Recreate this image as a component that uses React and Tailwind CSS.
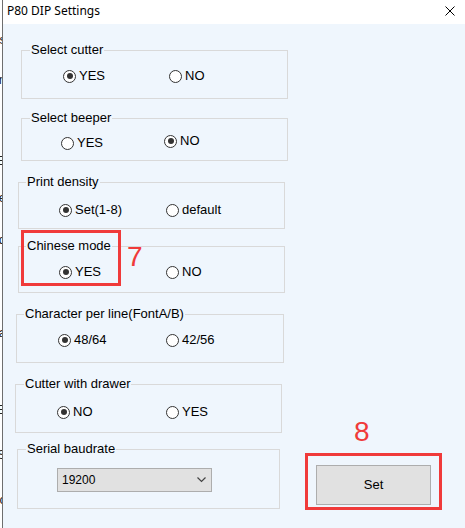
import React from "react";

const font = { fontFamily: '"Liberation Sans", Arial, sans-serif' };

function Radio({ checked, label, width, className = "" }) {
  return (
    <div className={"flex items-center h-[16px] " + className} style={width ? { width } : undefined}>
      <span className="w-[13px] h-[13px] rounded-full border border-[#333333] bg-white flex items-center justify-center shrink-0">
        {checked && <span className="w-[6px] h-[6px] rounded-full bg-[#333333]" />}
      </span>
      <span className="ml-[3px] text-[13px] leading-[16px] text-black">{label}</span>
    </div>
  );
}

function Group({ label, labelLeft, className, children }) {
  return (
    <div className={"relative border border-[#d9d9d9] " + className}>
      <span
        className="absolute top-[-9px] px-[1px] bg-[#eff6fd] text-[13px] leading-[16px] text-black whitespace-nowrap"
        style={{ left: labelLeft }}
      >
        {label}
      </span>
      {children}
    </div>
  );
}

export default function App() {
  const frags = [
    { t: "s", y: 32 },
    { t: "n", y: 72 },
    { t: ".", y: 112 },
    { t: "E", y: 153 },
    { t: "e", y: 190 },
    { t: "d", y: 232 },
    { t: "a", y: 325 },
    { t: "E", y: 402 },
    { t: "S", y: 447 },
    { t: "c", y: 492 },
  ];
  return (
    <div className="w-[465px] h-[528px] flex bg-[#eff6fd] overflow-hidden" style={font}>
      {/* background window fragment */}
      <div className="relative w-[2px] h-full bg-white overflow-hidden shrink-0">
        {frags.map((f, i) => (
          <span
            key={i}
            className="absolute right-[-4px] text-[13px] leading-[16px] text-[#222]"
            style={{ top: f.y }}
          >
            {f.t}
          </span>
        ))}
      </div>
      <div className="w-[1px] h-full bg-[#6e6e6e] shrink-0" />

      {/* dialog */}
      <div className="flex-1 flex flex-col">
        <div className="h-[24px] bg-white flex items-start justify-between shrink-0">
          <span
            className="ml-[4px] text-[12px] leading-[21px] text-black"
            style={{ fontFamily: '"Noto Sans", "Open Sans", sans-serif' }}
          >
            P80 DIP Settings
          </span>
          <svg width="10" height="10" viewBox="0 0 10 10" className="mt-[6px] mr-[10px]">
            <path d="M0.5 0.5 L9.5 9.5 M9.5 0.5 L0.5 9.5" stroke="#000" strokeWidth="1" />
          </svg>
        </div>

        <div className="flex-1 flex">
          {/* left column */}
          <div className="w-[285px] flex flex-col shrink-0">
            <Group label="Select cutter" labelLeft={8} className="ml-[18px] mt-[26px] w-[267px] h-[49px]">
              <div className="flex pt-[17px] pl-[41px]">
                <Radio checked label="YES" width={106} />
                <Radio label="NO" />
              </div>
            </Group>

            <Group label="Select beeper" labelLeft={8} className="ml-[18px] mt-[19px] w-[267px] h-[43px]">
              <div className="flex items-start pt-[16px] pl-[39px]">
                <Radio label="YES" width={103} />
                <Radio checked label="NO" className="mt-[-2px]" />
              </div>
            </Group>

            <Group label="Print density" labelLeft={7} className="ml-[15px] mt-[21px] w-[267px] h-[47px]">
              <div className="flex pt-[19px] pl-[40px]">
                <Radio checked label="Set(1-8)" width={107} />
                <Radio label="default" />
              </div>
            </Group>

            <Group label="Chinese mode" labelLeft={7} className="ml-[15px] mt-[17px] w-[267px] h-[47px]">
              <div className="flex pt-[17px] pl-[40px]">
                <Radio checked label="YES" width={107} />
                <Radio label="NO" />
              </div>
              <div className="absolute left-[2px] top-[-17px] w-[100px] h-[56px] border-[3px] border-[#f03a3a]" />
              <span className="absolute left-[108px] top-[-4px] text-[28px] leading-[28px] text-[#f03a3a]">7</span>
            </Group>

            <Group label="Character per line(FontA/B)" labelLeft={7} className="ml-[13px] mt-[21px] w-[268px] h-[49px]">
              <div className="flex pt-[17px] pl-[41px]">
                <Radio checked label="48/64" width={108} />
                <Radio label="42/56" />
              </div>
            </Group>

            <Group label="Cutter with drawer" labelLeft={8} className="ml-[12px] mt-[21px] w-[267px] h-[49px]">
              <div className="flex pt-[19px] pl-[41px]">
                <Radio checked label="NO" width={109} />
                <Radio label="YES" />
              </div>
            </Group>

            <Group label="Serial baudrate" labelLeft={8} className="ml-[14px] mt-[16px] w-[263px] h-[60px]">
              <div className="pt-[18px] pl-[39px]">
                <div className="w-[155px] h-[24px] bg-[#e1e1e1] border border-[#adadad] flex items-center justify-between pl-[4px] pr-[5px]">
                  <span className="text-[12px] leading-[16px] text-black">19200</span>
                  <svg width="9" height="6" viewBox="0 0 9 6">
                    <path d="M0.5 0.5 L4.5 4.5 L8.5 0.5" fill="none" stroke="#444" strokeWidth="1.2" />
                  </svg>
                </div>
              </div>
            </Group>
          </div>

          {/* right column */}
          <div className="flex-1 flex flex-col justify-end pb-[18px]">
            <span className="ml-[66px] text-[28px] leading-[28px] text-[#f03a3a]">8</span>
            <div className="ml-[17px] mt-[7px] w-[137px] h-[57px] border-[3px] border-[#f03a3a] pl-[8px] pt-[9px]">
              <div className="w-[115px] h-[40px] bg-[#e1e1e1] border border-[#adadad] flex items-center justify-center text-[13px] leading-[16px] text-black">
                Set
              </div>
            </div>
          </div>
        </div>
      </div>
    </div>
  );
}
